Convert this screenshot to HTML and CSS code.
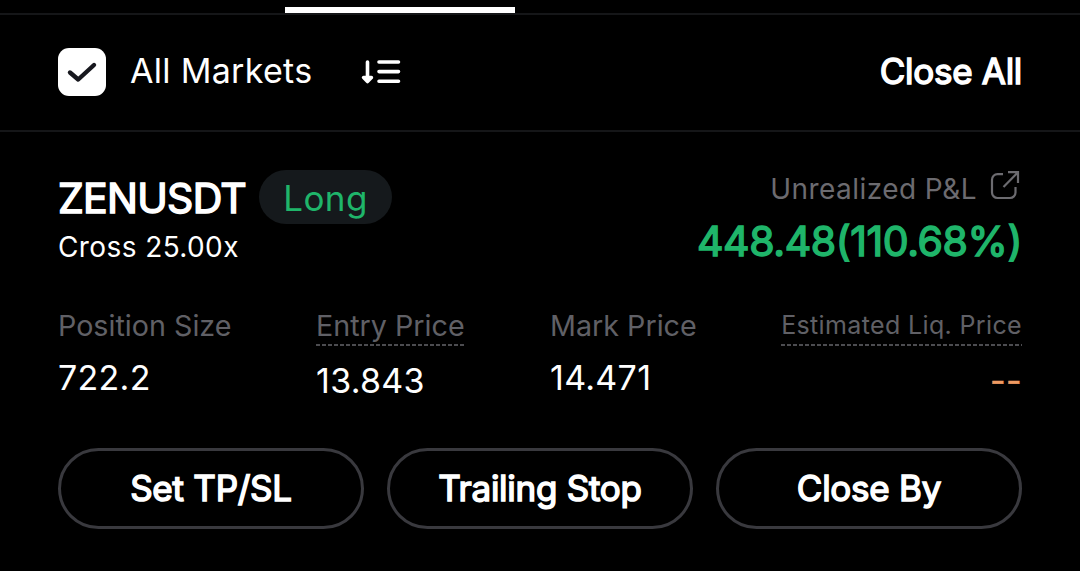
FILE: index.html
```html
<!DOCTYPE html>
<html lang="en">
<head>
<meta charset="utf-8">
<title>Positions</title>
<link rel="stylesheet" href="styles.css">
</head>
<body>
<main class="screen">
  <div class="tabs"><div class="tab-indicator"></div></div>

  <header class="toolbar">
    <div class="filter">
      <svg class="checkbox" viewBox="0 0 48 48"><rect width="48" height="48" rx="11" fill="#fff"/><path d="M12 24.5 20.2 31.5 36 17" fill="none" stroke="#17181e" stroke-width="4.4" stroke-linecap="round" stroke-linejoin="round"/></svg>
      <span class="filter-label">All Markets</span>
      <svg class="sort" viewBox="0 0 40 26"><g fill="none" stroke="#fff" stroke-width="3.6" stroke-linecap="round" stroke-linejoin="round"><path d="M6.5 3V20M18 3H37.5M18 12.6H37.5M18 22.3H37.5"/><path d="M2.6 18.6H10.4L6.5 22.5Z" fill="#fff"/></g></svg>
    </div>
    <span class="close-all bold">Close All</span>
  </header>

  <section class="position">
    <div class="summary">
      <div class="instrument">
        <div class="symbol-row">
          <h1 class="symbol bold">ZENUSDT</h1>
          <span class="side">Long</span>
        </div>
        <div class="margin-mode">Cross 25.00x</div>
      </div>
      <div class="pnl">
        <div class="pnl-head">
          <span class="pnl-label">Unrealized P&amp;L</span>
          <svg class="share" viewBox="0 0 30 30"><path d="M13 4.2H7.5A5.5 5.5 0 0 0 2 9.7V22.5A5.5 5.5 0 0 0 7.5 28H20A5.5 5.5 0 0 0 25.5 22.5V17M18 2.2H28V13M28 2.2 13.5 17" fill="none" stroke="#6c6b70" stroke-width="2.2"/></svg>
        </div>
        <div class="pnl-value bold">448.48(110.68%)</div>
      </div>
    </div>

    <div class="stats">
      <div class="stat"><div class="label">Position Size</div><div class="value">722.2</div></div>
      <div class="stat hinted"><div class="label">Entry Price</div><div class="value">13.843</div></div>
      <div class="stat"><div class="label">Mark Price</div><div class="value">14.471</div></div>
      <div class="stat hinted liq"><div class="label small">Estimated Liq. Price</div><div class="value warn">--</div></div>
    </div>

    <div class="actions">
      <button class="action bold">Set TP/SL</button>
      <button class="action bold">Trailing Stop</button>
      <button class="action bold">Close By</button>
    </div>
  </section>
</main>
</body>
</html>
```
FILE: styles.css
```css
* { box-sizing: border-box; }
body { margin: 0; background: #000; color: #fff; font-family: Inter, "Liberation Sans", sans-serif; }
.screen { width: 1080px; height: 571px; overflow: hidden; }
.bold { -webkit-text-stroke: 1.5px currentColor; }
.tabs { height: 15px; padding: 7px 0 0 285px; border-bottom: 2px solid #151618; }
.tab-indicator { width: 230px; height: 6px; background: #fff; }

.toolbar { height: 117px; padding: 0 58px 2px; display: flex; justify-content: space-between; align-items: center; border-bottom: 2px solid #151618; }
.filter { display: flex; align-items: center; }
.checkbox { width: 48px; height: 48px; }
.filter-label { margin-left: 24px; width: 207px; padding-bottom: 2px; font-size: 34px; line-height: 42px; letter-spacing: 0.3px; }
.sort { width: 40px; height: 26px; margin: 1px 0 0 24px; }
.close-all { font-size: 35px; line-height: 44px; padding-bottom: 1px; letter-spacing: -0.3px; }

.position { padding: 38px 58px 0; }
.summary { display: flex; justify-content: space-between; height: 100px; }
.symbol-row { display: flex; align-items: center; height: 54px; }
.symbol { margin: 0; padding-top: 2px; width: 201px; font-size: 41px; font-weight: 400; line-height: 54px; letter-spacing: -0.7px; }
.side { height: 54px; width: 133px; border-radius: 27px; background: #15191c; color: #1fb56a; text-align: center; font-size: 35px; line-height: 56px; letter-spacing: 0.4px; }
.margin-mode { font-size: 28px; line-height: 46px; letter-spacing: 0.4px; }
.pnl { display: flex; flex-direction: column; align-items: flex-end; }
.pnl-head { display: flex; align-items: flex-start; gap: 13px; padding-right: 2px; color: #6c6b70; font-size: 28px; line-height: 38px; letter-spacing: 0.45px; }
.share { width: 30px; height: 30px; }
.pnl-value { font-size: 41px; line-height: 67px; color: #1fb56a; letter-spacing: -0.4px; }

.stats { display: grid; grid-template-columns: 258px 234px 150px 1fr; margin-top: 36px; height: 108px; }
.label { width: max-content; color: #606066; font-size: 28.7px; line-height: 40px; height: 38px; }
.small { font-size: 25px; line-height: 38px; letter-spacing: 0.36px; }
.hinted .label { height: 40px; background: repeating-linear-gradient(90deg, #4c4c50 0 4px, transparent 4px 6px) left bottom / 100% 2px no-repeat; }
.value { font-size: 34px; line-height: 68px; letter-spacing: 0.3px; }
.hinted .value { line-height: 70px; }
.liq { justify-self: end; }
.liq .value { text-align: right; }
.warn { color: #ee9a62; -webkit-text-stroke: 0.4px currentColor; }

.actions { display: grid; grid-template-columns: repeat(3, 1fr); gap: 23px; margin-top: 34px; }
.action { height: 81px; padding: 0; border: 3px solid #39393e; border-radius: 41px; background: #000; color: #fff; font-family: inherit; font-size: 35px; line-height: 75px; letter-spacing: -0.25px; }
```
